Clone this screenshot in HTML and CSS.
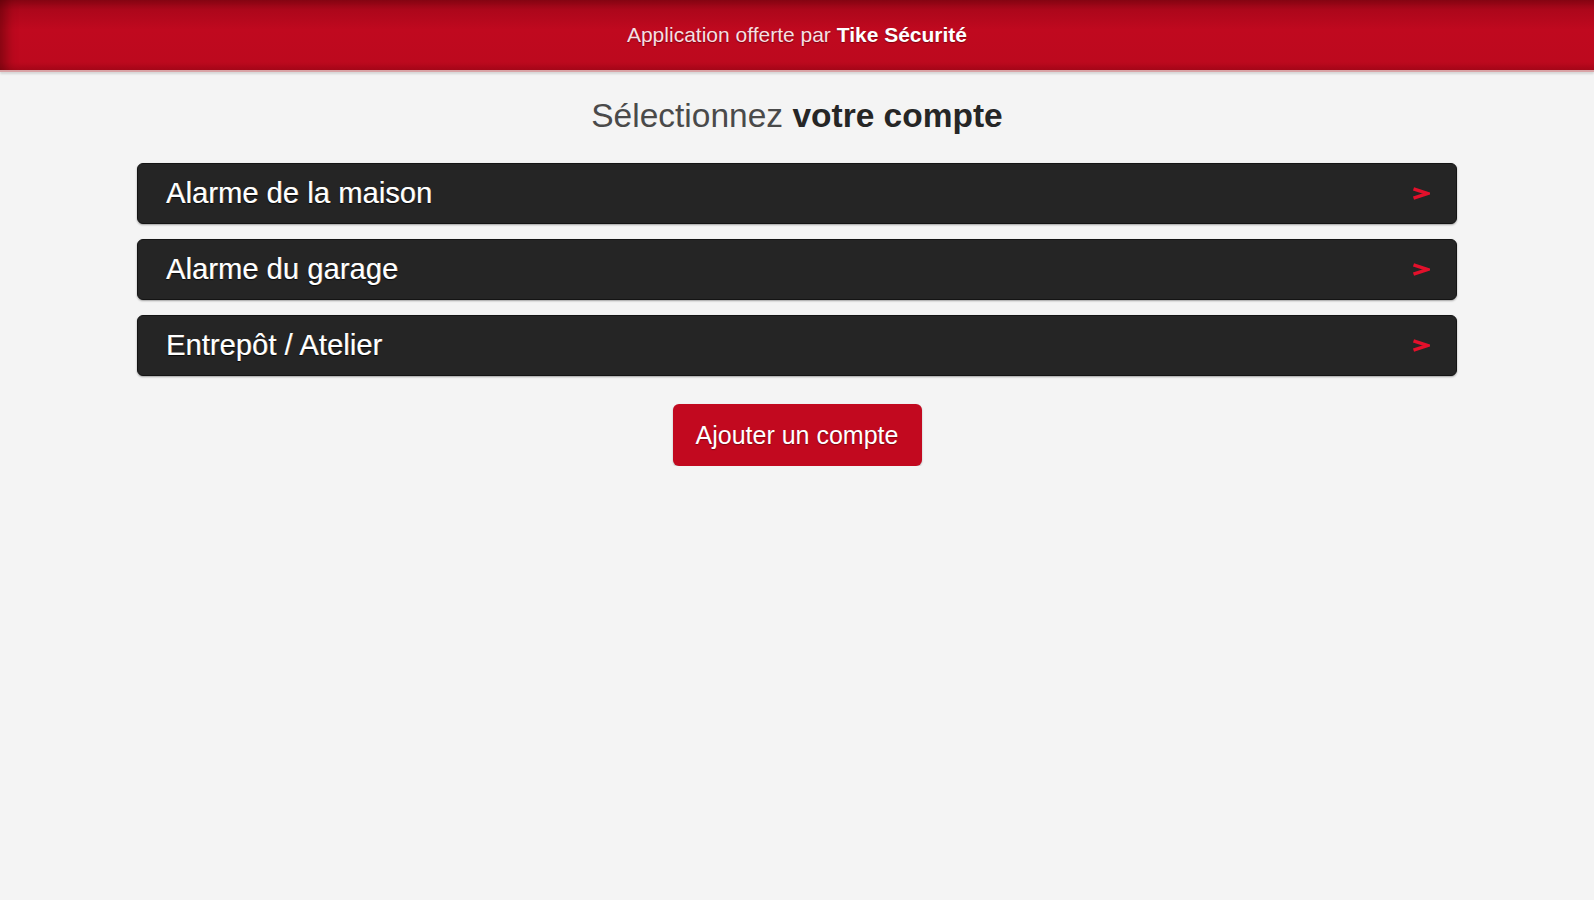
FILE: index.html
```html
<!DOCTYPE html>
<html lang="fr">
<head>
    <meta charset="UTF-8">
    <meta name="viewport" content="width=device-width, initial-scale=1.0">
    <title>Sélectionnez votre compte</title>
    <link rel="stylesheet" href="styles.css">
</head>
<body>
    <div class="topbar">
        <span class="offer">Application offerte par <b>Tike Sécurité</b></span>
    </div>

    <div class="container">
        <h1 class="title">Sélectionnez <b>votre compte</b></h1>

        <div class="accounts">
            <a class="account" href="#">
                <span>Alarme de la maison</span>
                <svg class="chevron" width="18" height="13" viewBox="0 0 18 13"><path d="M1.5 1.8 L15.5 6.5 L1.5 11.2" fill="none" stroke="#e3102b" stroke-width="3.4" stroke-linejoin="miter"/></svg>
            </a>
            <a class="account" href="#">
                <span>Alarme du garage</span>
                <svg class="chevron" width="18" height="13" viewBox="0 0 18 13"><path d="M1.5 1.8 L15.5 6.5 L1.5 11.2" fill="none" stroke="#e3102b" stroke-width="3.4" stroke-linejoin="miter"/></svg>
            </a>
            <a class="account" href="#">
                <span>Entrepôt / Atelier</span>
                <svg class="chevron" width="18" height="13" viewBox="0 0 18 13"><path d="M1.5 1.8 L15.5 6.5 L1.5 11.2" fill="none" stroke="#e3102b" stroke-width="3.4" stroke-linejoin="miter"/></svg>
            </a>
        </div>

        <div class="actions">
            <button class="add">Ajouter un compte</button>
        </div>
    </div>
</body>
</html>
```

FILE: styles.css
```css
body {
    margin: 0;
    background-color: #f4f4f4;
    font-family: "Liberation Sans", Arial, sans-serif;
}
.topbar {
    height: 70px;
    display: flex;
    align-items: center;
    justify-content: center;
    background: linear-gradient(to bottom, #870513 0, #ad071b 10px, #c0091f 30px, #bd091e 62px, #a80719 70px);
    box-shadow: inset 14px 0 12px -8px rgba(60, 0, 0, 0.45), 0 2px 2px rgba(0, 0, 0, 0.12);
    border-bottom: 2px solid #d9a3a6;
}
.offer {
    font-size: 21px;
    color: #f6dfe1;
    text-shadow: 0 1px 1px rgba(60, 0, 0, 0.5);
}
.offer b {
    color: #ffffff;
}
.container {
    max-width: 1320px;
    margin: 0 auto;
}
.title {
    margin: 24px 0 27px;
    font-size: 33.5px;
    line-height: 40px;
    font-weight: normal;
    text-align: center;
    color: #4a4a4a;
}
.title b {
    color: #262626;
}
.accounts {
    display: flex;
    flex-direction: column;
    gap: 15px;
}
.account {
    height: 61px;
    box-sizing: border-box;
    display: flex;
    align-items: center;
    justify-content: space-between;
    padding: 0 26px 0 28px;
    background: #252525;
    border: 1px solid #141414;
    border-radius: 6px;
    box-shadow: 0 1px 2px rgba(0, 0, 0, 0.35);
    color: #ffffff;
    font-size: 29px;
    letter-spacing: 0.1px;
    text-decoration: none;
    text-shadow: 0 1px 1px rgba(0, 0, 0, 0.8), 0.5px 0 0 rgba(255, 255, 255, 0.75);
}
.chevron {
    display: block;
}
.actions {
    display: flex;
    justify-content: center;
    margin-top: 28px;
}
button.add {
    width: 249px;
    height: 62px;
    border: none;
    border-radius: 6px;
    background: #c2091f;
    box-shadow: 0 1px 2px rgba(0, 0, 0, 0.25);
    color: #ffffff;
    font-family: "Liberation Sans", Arial, sans-serif;
    font-size: 25px;
    text-shadow: 0 1px 1px rgba(60, 0, 0, 0.5);
    cursor: pointer;
}
```
